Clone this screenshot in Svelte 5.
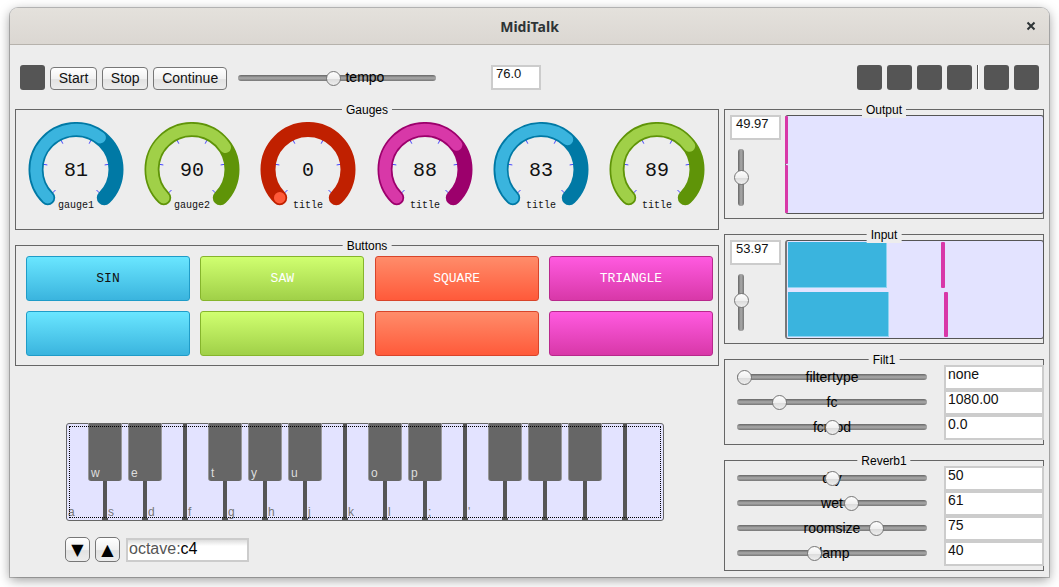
<script>
  const polar = (r, deg) => {
    const a = (deg * Math.PI) / 180;
    return [48 + r * Math.sin(a), 47.5 - r * Math.cos(a)];
  };
  const arc = (from, to, r = 40) => {
    const [x1, y1] = polar(r, from);
    const [x2, y2] = polar(r, to);
    const large = to - from > 180 ? 1 : 0;
    return `M${x1.toFixed(2)} ${y1.toFixed(2)}A${r} ${r} 0 ${large} 1 ${x2.toFixed(2)} ${y2.toFixed(2)}`;
  };
  const ticks = [-135, -81, -27, 27, 81, 135].map((d) => {
    const [x1, y1] = polar(29, d);
    const [x2, y2] = polar(34, d);
    return { x1, y1, x2, y2 };
  });
  const gauges = [
    { v: 81, t: 'gauge1', c: 'blue' },
    { v: 90, t: 'gauge2', c: 'green' },
    { v: 0, t: 'title', c: 'red' },
    { v: 88, t: 'title', c: 'pink' },
    { v: 83, t: 'title', c: 'blue' },
    { v: 89, t: 'title', c: 'green' }
  ];
  const colors = ['blue', 'green', 'red', 'pink'];
  const labels = ['SIN', 'SAW', 'SQUARE', 'TRIANGLE'];
  const whites = ['a', 's', 'd', 'f', 'g', 'h', 'j', 'k', 'l', ';', "'", '', '', '', ''];
  const blacks = [
    [21, 'w'], [61, 'e'], [141, 't'], [181, 'y'], [221, 'u'],
    [301, 'o'], [341, 'p'], [421, ''], [461, ''], [501, '']
  ];
  const filt = [
    { l: 'filtertype', p: 0, v: 'none' },
    { l: 'fc', p: 34.5, v: '1080.00' },
    { l: 'fcmod', p: 87.5, v: '0.0' }
  ];
  const rev = [
    { l: 'dry', p: 87.5, v: '50' },
    { l: 'wet', p: 106.5, v: '61' },
    { l: 'roomsize', p: 131.5, v: '75' },
    { l: 'damp', p: 69.5, v: '40' }
  ];
</script>

{#snippet slider(label, pos, cls)}
  <div class="slider {cls}">
    <div class="track"></div>
    <span class="slabel">{label}</span>
    <div class="thumb" style="left:{pos}px"></div>
  </div>
{/snippet}

{#snippet rows(items)}
  {#each items as r}
    <div class="krow">
      {@render slider(r.l, r.p, 'wide')}
      <div class="field val">{r.v}</div>
    </div>
  {/each}
{/snippet}

{#snippet side(value, pos)}
  <div class="side">
    <div class="field num">{value}</div>
    <div class="vslider">
      <div class="vtrack"></div>
      <div class="thumb" style="top:{pos}px"></div>
    </div>
  </div>
{/snippet}

<div class="window">
  <header class="titlebar">
    <span class="title">MidiTalk</span>
    <svg class="close" width="10" height="10" viewBox="0 0 10 10"><path d="M1.5 1.5l7 7M8.5 1.5l-7 7" /></svg>
  </header>
  <div class="content">
    <div class="toolbar">
      <div class="square"></div>
      <button class="btn">Start</button>
      <button class="btn">Stop</button>
      <button class="btn">Continue</button>
      {@render slider('tempo', 88, 'tempo')}
      <div class="field tempoval">76.0</div>
      <div class="spacer"></div>
      <div class="square"></div>
      <div class="square"></div>
      <div class="square"></div>
      <div class="square"></div>
      <div class="sep"></div>
      <div class="square"></div>
      <div class="square"></div>
    </div>

    <div class="main">
      <div class="left">
        <section class="panel gauges">
          <span class="legend">Gauges</span>
          {#each gauges as g}
            <svg class="gauge {g.c}" width="96" height="100" viewBox="0 0 96 100">
              {#each ticks as t}
                <line x1={t.x1} y1={t.y1} x2={t.x2} y2={t.y2} class="tick" />
              {/each}
              <path d={arc(-135, 135)} class="bg" />
              <path d={arc(-135, -135 + (270 * g.v) / 127)} class="fg" />
              <text x="48" y="54" class="gv">{g.v}</text>
              <text x="48" y="86" class="gt">{g.t}</text>
            </svg>
          {/each}
        </section>

        <section class="panel pads">
          <span class="legend">Buttons</span>
          {#each [0, 1] as row}
            {#each colors as c, i}
              <div class="pad {c}" class:dark={i === 0}>{row === 0 ? labels[i] : ''}</div>
            {/each}
          {/each}
        </section>

        <div class="keyboard">
          {#each whites as k}
            <div class="white"><span>{k}</span></div>
          {/each}
          {#each blacks as [x, k]}
            <div class="black" style="left:{x}px"><span>{k}</span></div>
          {/each}
          <div class="dots"></div>
        </div>

        <div class="octave">
          <button class="btn arrow">▼</button>
          <button class="btn arrow">▲</button>
          <div class="octfield"><span>octave:</span>c4</div>
        </div>
      </div>

      <div class="right">
        <section class="panel scopepanel">
          <span class="legend">Output</span>
          {@render side('49.97', 20.5)}
          <div class="scope out">
            <div class="srow"><div class="peak" style="left:-1px"></div></div>
            <div class="srow"><div class="peak" style="left:-1px"></div></div>
          </div>
        </section>

        <section class="panel scopepanel">
          <span class="legend">Input</span>
          {@render side('53.97', 18.5)}
          <div class="scope">
            <div class="srow"><div class="fill" style="width:98.5px"></div><div class="peak" style="left:152.5px"></div></div>
            <div class="srow"><div class="fill" style="width:100.5px"></div><div class="peak" style="left:155.5px"></div></div>
          </div>
        </section>

        <section class="panel knobs">
          <span class="legend">Filt1</span>
          {@render rows(filt)}
        </section>

        <section class="panel knobs">
          <span class="legend">Reverb1</span>
          {@render rows(rev)}
        </section>
      </div>
    </div>
  </div>
</div>

<style>
  :global(html),
  :global(body) {
    height: 587px;
  }
  :global(body) {
    margin: 0;
    background: #fff;
    overflow: hidden;
  }
  :global(#app) {
    padding: 8px 10px 10px;
  }
  .window {
    position: relative;
    box-sizing: border-box;
    width: 1039px;
    height: 569px;
    background: #ededed;
    border-radius: 8px 8px 0 0;
    box-shadow: 0 0 0 1px rgba(0, 0, 0, 0.22), 0 3px 12px rgba(0, 0, 0, 0.4);
    font: 14px "Liberation Sans", Arial, sans-serif;
    color: #000;
  }
  .titlebar {
    box-sizing: border-box;
    height: 37px;
    display: flex;
    align-items: center;
    justify-content: center;
    position: relative;
    background: linear-gradient(#e4e1dc, #dbd7d2);
    border-bottom: 1px solid #b6b2ac;
    border-radius: 8px 8px 0 0;
  }
  .title {
    font: bold 14px "Noto Sans", sans-serif;
    color: #2e3436;
  }
  .close {
    position: absolute;
    right: 13px;
    top: 13px;
    fill: none;
    stroke: #2e3436;
    stroke-width: 2;
  }
  .content {
    padding: 20px 5px 0;
  }
  .toolbar {
    display: flex;
    gap: 5px;
    height: 25px;
    padding: 0 5px;
    align-items: flex-end;
    margin-bottom: 19px;
  }
  .spacer {
    flex: 1;
  }
  .square {
    width: 25px;
    height: 25px;
    background: #555;
    border-radius: 3px;
    flex: none;
  }
  .sep {
    width: 1px;
    height: 24px;
    align-self: flex-start;
    background: #555;
    border-right: 1px solid #fff;
  }
  .btn {
    box-sizing: border-box;
    height: 23px;
    padding: 0 7.75px 1px;
    border: 1px solid #777;
    border-radius: 4px;
    background: linear-gradient(#fff, #f1f1f1 50%, #e2e2e2 55%, #ececec);
    font: 14px "Liberation Sans", Arial, sans-serif;
    color: #111;
  }
  .field {
    box-sizing: border-box;
    border: 2px solid #ccc;
    background: #fff;
    font-size: 14px;
    line-height: 14px;
    height: 25px;
    padding: 0 3px;
    color: #111;
  }
  .tempoval {
    width: 50px;
    margin-left: 50px;
    font-size: 13px;
  }
  .slider {
    position: relative;
    height: 16px;
    flex: none;
  }
  .slider.wide {
    width: 190px;
  }
  .slider.tempo {
    width: 198px;
    margin: 0 0 4px 6px;
  }
  .track {
    position: absolute;
    left: 0;
    right: 0;
    top: 4.5px;
    height: 6px;
    border-radius: 3px;
    background: linear-gradient(#666, #aaa 50%, #777);
  }
  .slabel {
    position: absolute;
    left: 50%;
    top: -1px;
    line-height: 16px;
    transform: translateX(-50%);
    white-space: nowrap;
  }
  .tempo .slabel {
    left: 127px;
  }
  .thumb {
    position: absolute;
    box-sizing: border-box;
    top: 0.5px;
    width: 15px;
    height: 15px;
    border-radius: 50%;
    border: 1px solid #777;
    background: linear-gradient(#fdfdfd, #f0f0f0 50%, #dcdcdc 55%, #eee);
  }
  .main {
    display: flex;
    gap: 5px;
  }
  .left {
    width: 704px;
  }
  .right {
    width: 320px;
    display: flex;
    flex-direction: column;
    gap: 15px;
  }
  .panel {
    position: relative;
    box-sizing: border-box;
    border: 1px solid #666;
  }
  .legend {
    position: absolute;
    top: -8px;
    left: 50%;
    transform: translateX(-50%);
    padding: 0 4px;
    background: #ededed;
    font-size: 12px;
    line-height: 16px;
    z-index: 1;
  }
  .gauges {
    height: 121px;
    padding: 12px 0 0 12px;
    display: flex;
    gap: 20.2px;
    margin-bottom: 15px;
  }
  .gauge {
    flex: none;
  }
  .bg,
  .fg {
    fill: none;
    stroke-linecap: round;
  }
  .bg {
    stroke-width: 15;
  }
  .fg {
    stroke-width: 11.5;
  }
  .tick {
    stroke: #4646ff;
    stroke-width: 1;
  }
  .gv,
  .gt {
    font-family: "Liberation Mono", monospace;
    text-anchor: middle;
    fill: #111;
  }
  .gv {
    font-size: 20px;
  }
  .gt {
    font-size: 10px;
  }
  .gauge.blue .bg { stroke: #0079a5; }
  .gauge.blue .fg { stroke: #3ab4de; }
  .gauge.green .bg { stroke: #5f9408; }
  .gauge.green .fg { stroke: #a0d048; }
  .gauge.red .bg { stroke: #c02000; }
  .gauge.red .fg { stroke: #ff5a3a; }
  .gauge.pink .bg { stroke: #9c006c; }
  .gauge.pink .fg { stroke: #d838a8; }
  .pads {
    height: 121px;
    padding: 10px 4px 0 10px;
    display: grid;
    grid-template-columns: repeat(4, 164px);
    grid-auto-rows: 45px;
    column-gap: 10.3px;
    row-gap: 10px;
  }
  .pad {
    box-sizing: border-box;
    border-radius: 3px;
    border: 1px solid;
    display: flex;
    align-items: center;
    justify-content: center;
    font: 13px "Liberation Mono", monospace;
    color: #fff;
  }
  .pad.dark {
    color: #111;
  }
  .pad.blue {
    background: linear-gradient(#6ae6ff, #3ab4de);
    border-color: #1f9cc8;
  }
  .pad.green {
    background: linear-gradient(#d0ff70, #a0d048);
    border-color: #86b52c;
  }
  .pad.red {
    background: linear-gradient(#ff8c6a, #ff5a3a);
    border-color: #d8442a;
  }
  .pad.pink {
    background: linear-gradient(#ff5ae0, #d838a8);
    border-color: #b8288c;
  }
  .keyboard {
    position: relative;
    box-sizing: border-box;
    display: flex;
    width: 598px;
    height: 98px;
    margin: 57px 0 16px 51px;
    background: #e3e3ff;
    border: 1px solid #666;
    border-radius: 3px;
  }
  .white {
    position: relative;
    box-sizing: border-box;
    width: 40px;
    flex: none;
    border-right: 4px solid #555;
    display: flex;
    align-items: flex-end;
    padding: 0 0 1px 1px;
    font-size: 12px;
    line-height: 14px;
    color: #777;
  }
  .white::after {
    content: "";
    position: absolute;
    right: -5px;
    bottom: 0;
    width: 6px;
    height: 2px;
    background: #555;
  }
  .white:nth-child(15) {
    width: 36px;
    border-right: 0;
  }
  .white:nth-child(15)::after {
    display: none;
  }
  .black {
    position: absolute;
    box-sizing: border-box;
    top: -1px;
    width: 34px;
    height: 58px;
    background: #666;
    border-right: 1px solid #999;
    border-left: 1px solid #999;
    border-radius: 0 0 3px 3px;
    display: flex;
    align-items: flex-end;
    padding: 0 0 1px 2px;
    font-size: 12px;
    line-height: 14px;
    color: #ddd;
  }
  .dots {
    position: absolute;
    inset: 2px 2px 2px 2px;
    border: 1px dotted #000;
  }
  .octave {
    display: flex;
    gap: 5px;
    margin-left: 50px;
  }
  .arrow {
    width: 25px;
    height: 25px;
    padding: 0;
    border-radius: 5px;
    font: 16px "DejaVu Sans", sans-serif;
    color: #000;
  }
  .octfield {
    box-sizing: border-box;
    width: 123px;
    height: 24px;
    margin: 1px 0 0 1px;
    border: 2px solid #ccc;
    padding: 0 1px;
    background: linear-gradient(#ddd, #fff 6px);
    font-size: 16px;
    line-height: 17px;
  }
  .octfield span {
    color: #555;
  }
  .scopepanel {
    height: 110px;
    padding: 5px 0 0 5px;
    display: flex;
    gap: 4px;
  }
  .side {
    width: 51px;
    flex: none;
  }
  .num {
    width: 51px;
    font-size: 13px;
    padding: 0 4px;
  }
  .vslider {
    position: relative;
    width: 15px;
    height: 57px;
    margin: 9px 0 0 3.5px;
  }
  .vtrack {
    position: absolute;
    left: 4.5px;
    top: 0;
    bottom: 0;
    width: 6px;
    border-radius: 3px;
    background: linear-gradient(90deg, #666, #aaa 50%, #777);
  }
  .vslider .thumb {
    left: 0;
  }
  .scope {
    box-sizing: border-box;
    position: relative;
    flex: 1;
    height: 99px;
    margin-right: -1px;
    display: flex;
    flex-direction: column;
    gap: 4px;
    padding: 1px 1px;
    background: #e3e3ff;
    border: 1px solid #555;
    border-left: 2px solid #777;
    border-radius: 3px;
  }
  .scope.out {
    gap: 1px;
    padding: 0;
    border-left-width: 1px;
  }
  .srow {
    position: relative;
    flex: 1;
  }
  .fill {
    box-sizing: border-box;
    height: 100%;
    background: #3ab4de;
    border: solid #8ed4f0;
    border-width: 0 1px 1px 0;
  }
  .peak {
    position: absolute;
    top: 0;
    bottom: 0;
    width: 4px;
    border-radius: 1px;
    background: #d838a8;
  }
  .out .peak {
    width: 2.5px;
  }
  .knobs {
    padding: 5px 0 0 12px;
    height: 86px;
  }
  .knobs:last-child {
    height: 111px;
  }
  .krow {
    display: flex;
    align-items: center;
    height: 25px;
    gap: 16.5px;
  }
  .val {
    width: 100.5px;
    margin-right: -1px;
    position: relative;
    padding: 0 2.5px;
  }
</style>
